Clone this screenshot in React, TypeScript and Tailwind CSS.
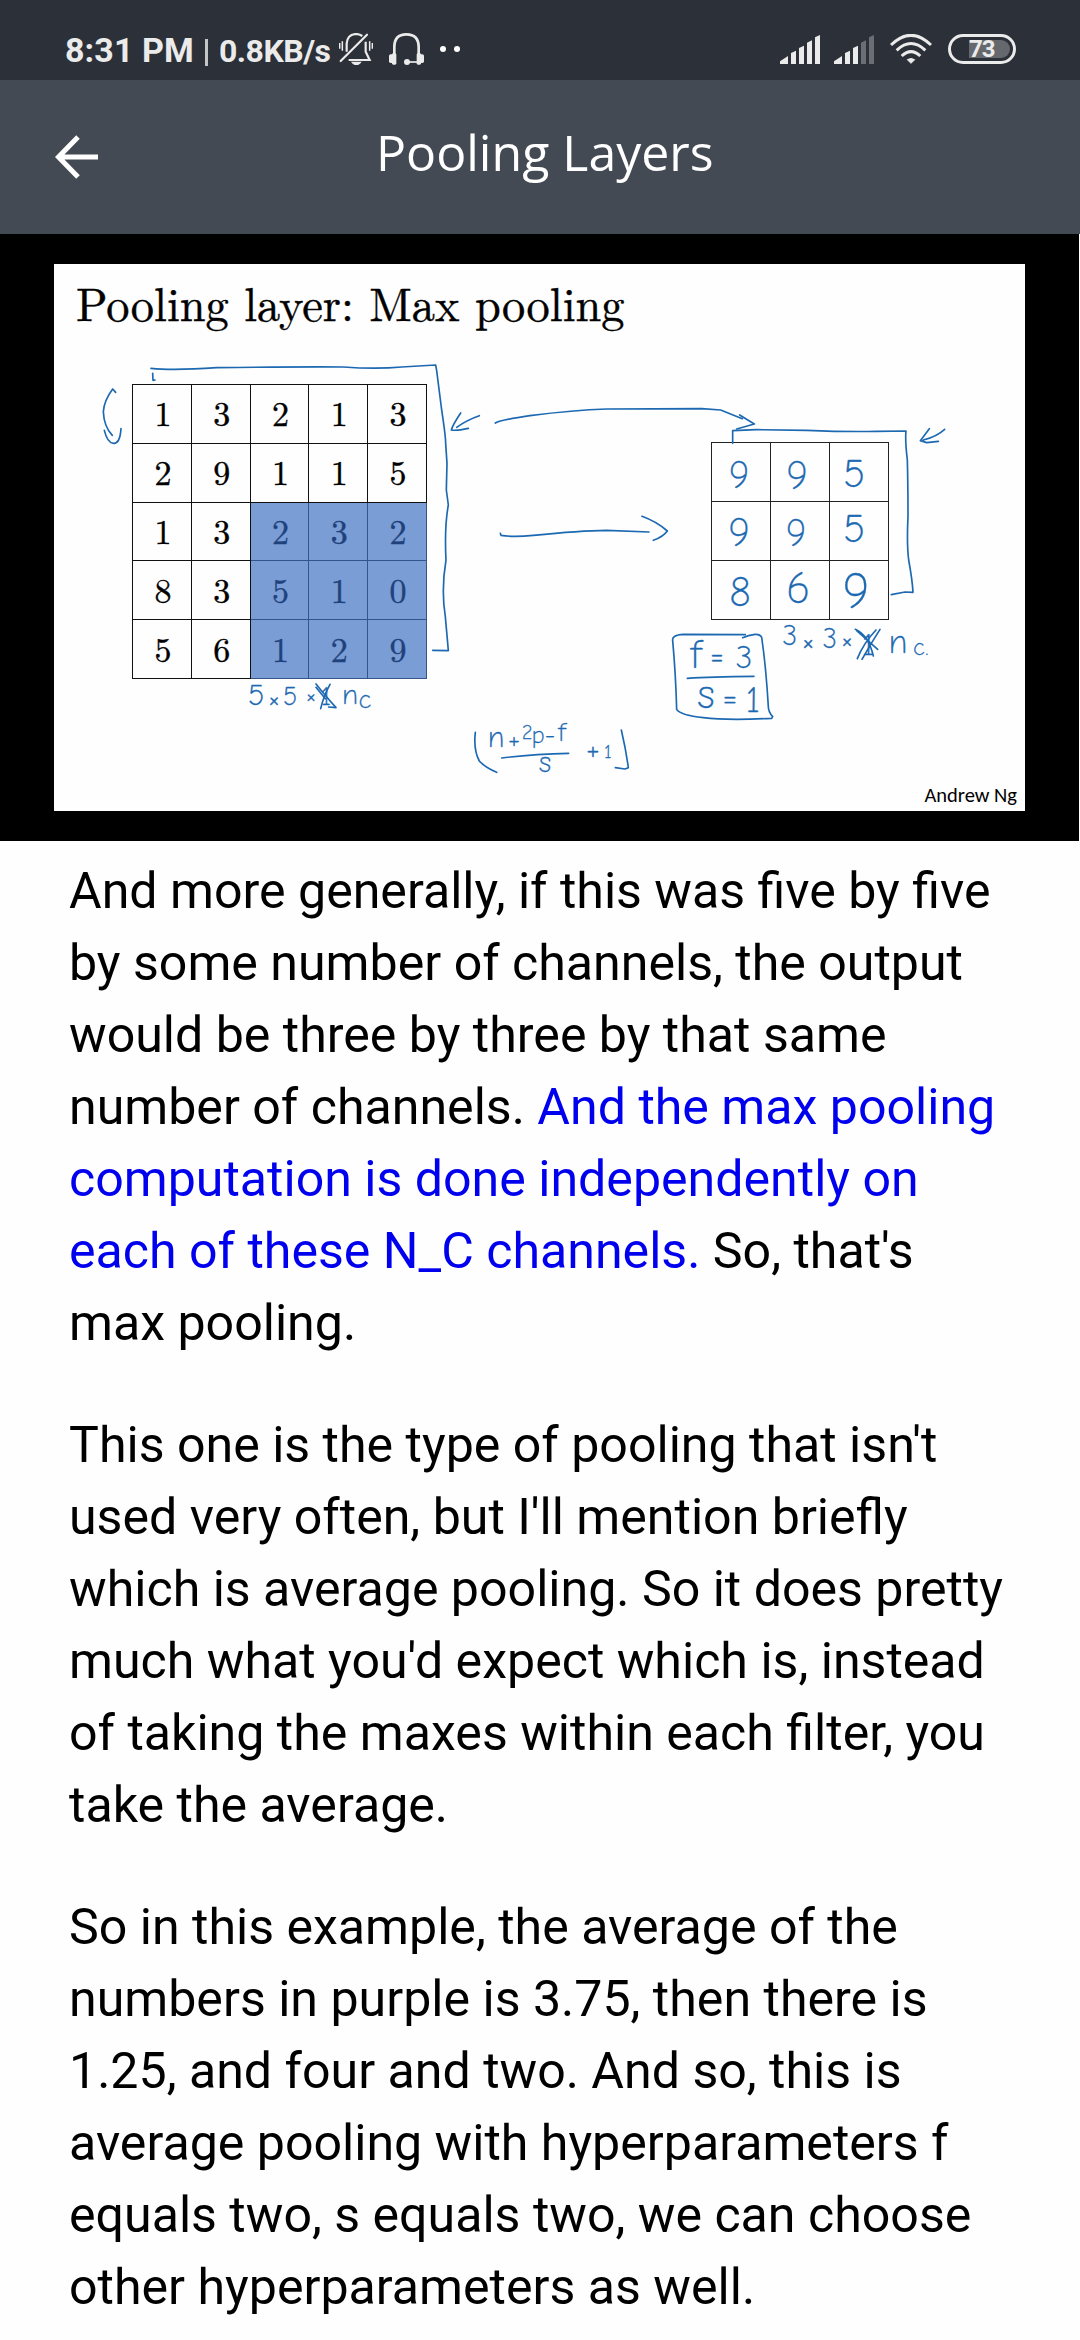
const matrix = [
  [1, 3, 2, 1, 3],
  [2, 9, 1, 1, 5],
  [1, 3, 2, 3, 2],
  [8, 3, 5, 1, 0],
  [5, 6, 1, 2, 9],
];

type Glyph = [text: string, centerX: number, baseline: number, size: number];

const handwriting: Glyph[] = [
  ["9", 739, 488, 38],
  ["9", 797, 489, 40],
  ["5", 854, 487, 40],
  ["9", 739, 546, 40],
  ["9", 796, 546, 38],
  ["5", 854, 542, 40],
  ["8", 740, 606, 42],
  ["6", 798, 603, 44],
  ["9", 856, 608, 50],
  ["f", 696, 668, 40],
  ["=", 717, 666, 30],
  ["3", 744, 668, 33],
  ["s", 706, 708, 42],
  ["=", 730, 708, 32],
  ["1", 753, 712, 36],
  ["3", 790, 645, 29],
  ["×", 808, 652, 34],
  ["3", 830, 648, 28],
  ["×", 847, 650, 32],
  ["1", 868, 655, 30],
  ["n", 898, 653, 34],
  ["c", 919, 655, 24],
  [".", 927, 655, 20],
  ["5", 256, 705, 30],
  ["×", 274, 709, 32],
  ["5", 290, 705, 26],
  ["×", 311, 704, 28],
  ["1", 326, 705, 26],
  ["n", 350, 704, 29],
  ["c", 365, 708, 26],
  ["n", 496, 747, 30],
  ["+", 514, 748, 28],
  ["2", 527, 739, 20],
  ["p", 538, 743, 24],
  ["-", 550, 743, 26],
  ["f", 562, 741, 27],
  ["s", 545, 772, 30],
  ["+", 593, 760, 32],
  ["1", 608, 758, 19],
];

function SlideInk() {
  return (
    <svg
      className="pointer-events-none absolute inset-0 h-full w-full"
      viewBox="54 264 971 547"
      fill="none"
      stroke="#1c69b2"
      strokeLinecap="round"
      strokeLinejoin="round"
      aria-hidden="true"
    >
      <g transform="translate(40 250) scale(.33333)" strokeWidth="5">
        <path d="M227 427L218 417Q192 452 190 485Q192 530 217 556M193 541Q202 578 220 580Q240 582 243 536" />
        <path d="M333 355Q400 362 530 353Q780 350 910 351Q1010 358 1085 351L1187 345L1190 362L1205 480Q1217 560 1217 580L1221 640L1219 720L1225 765Q1213 830 1218 930Q1203 1020 1216 1100L1225 1202L1178 1201" />
        <path d="M338 370L339 391L345 390" />
      </g>
      <g transform="translate(440 380) scale(.33333)" strokeWidth="5">
        <path d="M62 99Q38 135 34 150Q50 153 85 145M118 107Q80 120 50 142" />
        <path d="M166 129Q180 120 270 107Q400 90 500 87L785 86L842 90L907 116M899 105L943 132L890 147" />
        <path d="M181 460L183 466Q220 472 280 466Q420 452 500 451L627 456M606 409Q650 425 682 453Q670 470 640 481" />
        <path d="M106 1057Q100 1110 118 1143Q135 1162 170 1177M544 1050Q558 1110 565 1163L555 1167L526 1163M185 1134Q280 1122 386 1120" />
      </g>
      <g transform="translate(660 400) scale(.33333)" strokeWidth="5">
        <path d="M218 130L218 92L290 89L440 91Q560 96 650 94L738 93Q735 120 742 180Q744 250 744 350Q740 430 746 480Q757 540 759 577L735 576L694 584" />
        <path d="M808 86L781 122L800 128L835 124M854 88Q830 110 790 120" />
        <path d="M256 704L70 703Q35 705 38 722Q47 820 50 928Q60 945 130 953Q200 962 335 955L338 950Q325 935 325 920Q318 800 305 712Q300 702 285 703Q265 705 248 713M82 835Q150 830 282 829" />
        <path d="M586 688Q625 705 640 768M590 692L653 748M592 776Q610 730 648 690M606 778Q630 735 660 688" />
      </g>
      <g transform="translate(40 480) scale(.33333)" strokeWidth="5">
        <path d="M828 612Q850 640 888 683L866 681M870 613Q850 650 842 686M828 622L856 656" />
      </g>
      <g fill="#1c69b2" stroke="#1c69b2" strokeWidth=".3" className="font-['Comic_Neue','Open_Sans',sans-serif] font-light">
        {handwriting.map(([text, x, y, size], i) => (
          <text key={i} x={x} y={y} fontSize={size} textAnchor="middle">
            {text}
          </text>
        ))}
      </g>
    </svg>
  );
}

function Slide() {
  return (
    <div className="h-[607px] w-[1079px] bg-black pt-[30px] pl-[54px]">
      <div className="relative flex h-[547px] w-[971px] flex-col bg-[#fefefe] text-black">
        <h2 className="h-[120px] pt-[8px] pl-[22px] font-['Latin_Modern_Roman','Liberation_Serif',serif] text-[46.4px] leading-[60px] whitespace-nowrap [-webkit-text-stroke:0.4px_currentColor]">
          Pooling layer: Max pooling
        </h2>
        <div className="flex items-start gap-[284px] pl-[78px]">
          <div className="grid h-[295px] w-[295px] grid-cols-5 grid-rows-5 border-t border-l border-[#111] font-['Latin_Modern_Roman','Liberation_Serif',serif] text-[34px] leading-none [-webkit-text-stroke:0.4px_currentColor]">
            {matrix.map((row, r) =>
              row.map((value, c) => (
                <div
                  key={`${r}-${c}`}
                  className={
                    r > 1 && c > 1
                      ? "flex items-center justify-center border-r border-b border-[#35548c] bg-[#799dd4] pb-[3px] pl-[2px] text-[#1f417c]"
                      : "flex items-center justify-center border-r border-b border-[#111] pb-[3px] pl-[2px]"
                  }
                >
                  {value}
                </div>
              )),
            )}
          </div>
          <div className="mt-[58px] grid h-[178px] w-[178px] grid-cols-3 grid-rows-3 border-t border-l border-[#222]">
            {Array.from({ length: 9 }, (_, i) => (
              <div key={i} className="border-r border-b border-[#222]" />
            ))}
          </div>
        </div>
        <p className="mt-auto self-end pr-2 pb-[3px] font-['Carlito','Lato',sans-serif] text-[20.5px] leading-[26px]">
          Andrew Ng
        </p>
        <SlideInk />
      </div>
    </div>
  );
}

function BellOff() {
  return (
    <svg className="h-8 w-[34px]" viewBox="57 42 102 96" fill="none" stroke="#ebebeb" strokeWidth="6.5">
      <path d="M80 98V74Q82 46 108 45Q118 45 127 51M137 68V98L149 123H86" />
      <path d="M62 126L141 47" strokeLinecap="round" />
      <path d="M59 72V89M67 67V95M149 67V95M157 72V89" strokeWidth="4.500" />
      <path d="M93 128H125Q119 138 109 138Q99 138 93 128Z" fill="#ebebeb" stroke="none" />
    </svg>
  );
}

function Headset() {
  return (
    <svg className="ml-4 h-8 w-[35px]" viewBox="207 42 105 96" fill="none" stroke="#ebebeb" strokeWidth="8">
      <path d="M223 108V84Q223 46 259 46Q296 46 296 84V108" />
      <path d="M262 129H300" strokeWidth="5" />
      <g fill="#ebebeb" stroke="none">
        <circle cx="261" cy="129" r="9" />
        <rect x="207" y="106" width="14" height="26" rx="5" />
        <rect x="216" y="103" width="13" height="34" rx="4" />
        <rect x="298" y="106" width="14" height="26" rx="5" />
        <rect x="290" y="103" width="13" height="34" rx="4" />
      </g>
    </svg>
  );
}

function Signal({ weak = false }: { weak?: boolean }) {
  return (
    <svg className="h-[29px] w-10" viewBox="30 27 120 87" fill="#ebebeb">
      <path d="M30 114V106L54 90V114Z" />
      <path d="M63 114V81L78 74V114Z" />
      <path d="M87 114V66L102 59V114Z" />
      <path d="M111 114V50L126 43V114ZM135 114V34L150 27V114Z" fill={weak ? "#6b6e74" : "#ebebeb"} />
    </svg>
  );
}

function Wifi() {
  return (
    <svg className="h-[30px] w-[42px]" viewBox="360 27 126 90" fill="none" stroke="#ebebeb" strokeWidth="9">
      <path d="M363 60Q423 2 483 60M380 76Q423 35 466 76M395 93Q423 67 451 93" />
      <path d="M412 104Q423 97 434 104L423 115Z" fill="#ebebeb" strokeWidth="3" strokeLinejoin="round" />
    </svg>
  );
}

function StatusBar() {
  return (
    <div className="flex h-20 items-center bg-[#2c3038] pt-[18px] pr-16 pl-[65px] font-['Roboto',sans-serif] font-bold text-[#ebebeb]">
      <span className="pt-[2px] text-[34px] leading-[30px] tracking-[0.1px] whitespace-nowrap">8:31 PM</span>
      <span className="mt-[7px] ml-[11px] h-[27px] w-[3px] bg-[#c4c5c7]" />
      <span className="ml-[11px] w-[120px] pt-[3px] text-[32px] leading-[30px] tracking-[-0.5px] whitespace-nowrap">0.8KB/s</span>
      <BellOff />
      <Headset />
      <span className="ml-4 size-[6px] rounded-full bg-white" />
      <span className="ml-2 size-[6px] rounded-full bg-white" />
      <div className="ml-auto flex items-center">
        <Signal />
        <span className="w-[14px]" />
        <Signal weak />
        <span className="w-4" />
        <Wifi />
        <div className="ml-4 flex h-[30px] w-[68px] items-center rounded-full border-3 border-[#ebebeb] pl-[18px]">
          <span className="flex h-[18px] w-[41px] items-center rounded-r-full bg-[#65686d] text-[24px] leading-none tracking-[-1px]">73</span>
        </div>
      </div>
    </div>
  );
}

function Header() {
  return (
    <header className="flex h-[154px] items-center bg-[#444a54] text-white">
      <svg className="ml-[55px] h-11 w-11" viewBox="0 0 44 44" fill="none" stroke="white" strokeWidth="5">
        <path d="M43 22H4M23 2L3.500 22L23 42" />
      </svg>
      <h1 className="ml-[277px] pb-[10px] font-['Open_Sans',sans-serif] text-[50px] leading-[68px] whitespace-nowrap">
        Pooling Layers
      </h1>
    </header>
  );
}

export default function App() {
  return (
    <main className="h-[2340px] w-[1080px] overflow-hidden bg-[#fefefe]">
      <StatusBar />
      <Header />
      <Slide />
      <article className="flex flex-col gap-[50px] pt-[14px] pl-[69px] font-['Roboto',sans-serif] text-[50.1px] leading-[72px] whitespace-nowrap text-black">
        <p>
          And more generally, if this was five by five
          <br />
          by some number of channels, the output
          <br />
          would be three by three by that same
          <br />
          number of channels.{" "}
          <span className="text-[#0000ee]">
            And the max pooling
            <br />
            computation is done independently on
            <br />
            each of these N_C channels.
          </span>{" "}
          So, that's
          <br />
          max pooling.
        </p>
        <p>
          This one is the type of pooling that isn't
          <br />
          used very often, but I'll mention briefly
          <br />
          which is average pooling. So it does pretty
          <br />
          much what you'd expect which is, instead
          <br />
          of taking the maxes within each filter, you
          <br />
          take the average.
        </p>
        <p>
          So in this example, the average of the
          <br />
          numbers in purple is 3.75, then there is
          <br />
          1.25, and four and two. And so, this is
          <br />
          average pooling with hyperparameters f
          <br />
          equals two, s equals two, we can choose
          <br />
          other hyperparameters as well.
        </p>
      </article>
    </main>
  );
}
